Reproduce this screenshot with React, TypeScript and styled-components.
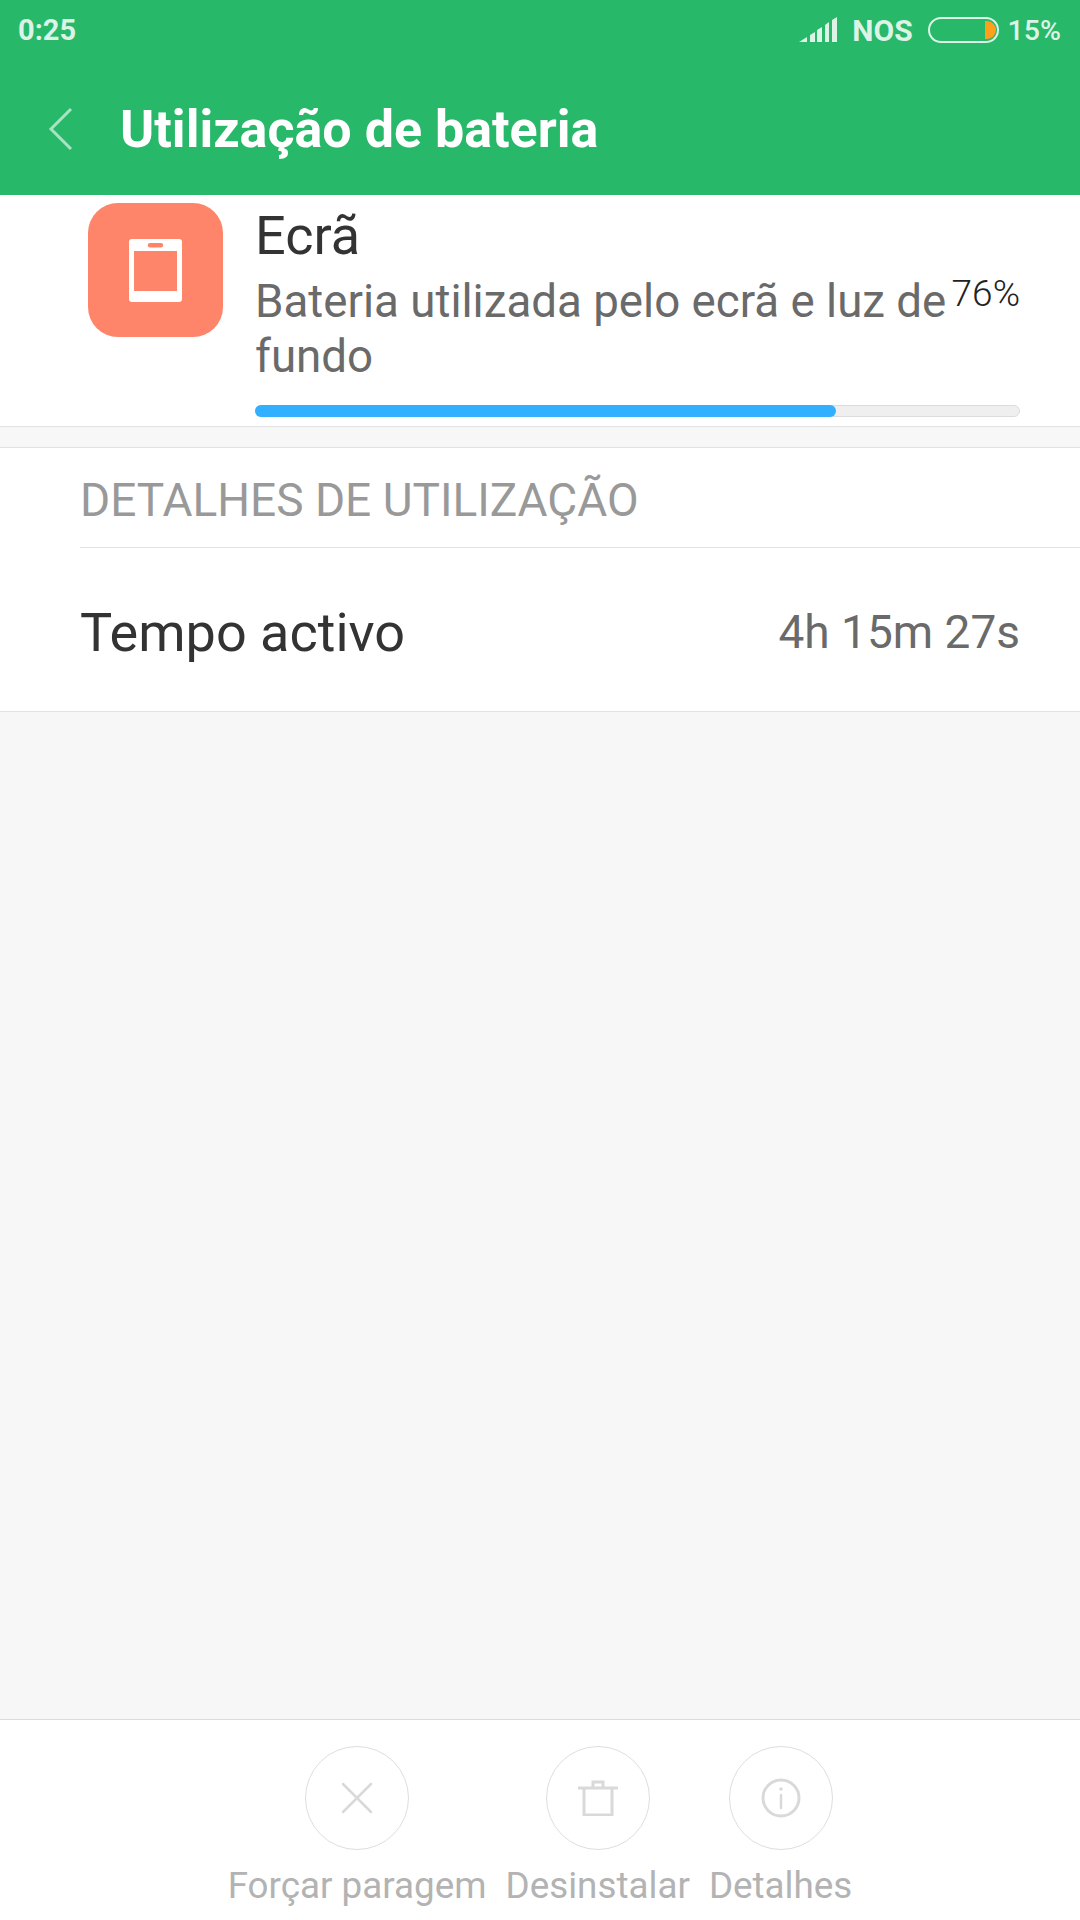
import React from "react";
import styled, { createGlobalStyle } from "styled-components";

const GlobalStyle = createGlobalStyle`
  html, body {
    margin: 0;
    padding: 0;
    background: #f7f7f7;
    font-family: Roboto, "Noto Sans", sans-serif;
  }
  * { box-sizing: border-box; }
`;

const App = () => {
  return (
    <Screen>
      <GlobalStyle />
      <Header>
        <StatusBar>
          <StatusTime>0:25</StatusTime>
          <StatusRight>
            <svg width="38" height="26" viewBox="0 0 38 26">
              <path
                d="M0 25 L8 20 V25 Z M11 18 L16 15 V25 H11 Z M18 13 L23 10 V25 H18 Z M26 8 L30 5 V25 H26 Z M33 3 L38 0 V25 H33 Z"
                fill="#dcf3e6"
              />
            </svg>
            <Carrier>NOS</Carrier>
            <BatteryShell>
              <BatteryFill />
            </BatteryShell>
            <StatusText>15%</StatusText>
          </StatusRight>
        </StatusBar>
        <TitleBar>
          <svg width="26" height="44" viewBox="0 0 26 44">
            <path d="M23 2 L3 22 L23 42" fill="none" stroke="#a9e3c3" strokeWidth="3" />
          </svg>
          <Title>Utilização de bateria</Title>
        </TitleBar>
      </Header>

      <SummaryCard>
        <AppTile>
          <svg width="53" height="63" viewBox="0 0 53 63">
            <path
              fillRule="evenodd"
              fill="#fff"
              d="M3 0 H50 A3 3 0 0 1 53 3 V60 A3 3 0 0 1 50 63 H3 A3 3 0 0 1 0 60 V3 A3 3 0 0 1 3 0 Z M5 12 V52 H48 V12 Z M21 4 A2.200 2.200 0 0 0 21 8.400 H32 A2.200 2.200 0 0 0 32 4 Z"
            />
          </svg>
        </AppTile>
        <SummaryBody>
          <SummaryName>Ecrã</SummaryName>
          <SummaryRow>
            <SummaryText>Bateria utilizada pelo ecrã e luz de fundo</SummaryText>
            <Percent>76%</Percent>
          </SummaryRow>
          <ProgressTrack>
            <ProgressFill style={{ width: `${(583 / 765) * 100}%` }} />
          </ProgressTrack>
        </SummaryBody>
      </SummaryCard>

      <DetailsCard>
        <SectionTitle>DETALHES DE UTILIZAÇÃO</SectionTitle>
        <DetailRow>
          <DetailLabel>Tempo activo</DetailLabel>
          <DetailValue>4h 15m 27s</DetailValue>
        </DetailRow>
      </DetailsCard>

      <Spacer />

      <ActionBar>
        <Action>
          <ActionCircle>
            <svg width="32" height="32" viewBox="0 0 32 32">
              <path d="M2 2 L30 30 M30 2 L2 30" stroke="#d9d9d9" strokeWidth="2.500" strokeLinecap="round" fill="none" />
            </svg>
          </ActionCircle>
          <ActionLabel>Forçar paragem</ActionLabel>
        </Action>
        <Action>
          <ActionCircle>
            <svg width="40" height="36" viewBox="0 0 40 36">
              <path
                d="M1 8 H39 M6 8 V35 H34 V8 M15 8 V2 H25 V8"
                stroke="#d9d9d9"
                strokeWidth="3"
                strokeLinecap="round"
                fill="none"
              />
            </svg>
          </ActionCircle>
          <ActionLabel>Desinstalar</ActionLabel>
        </Action>
        <Action>
          <ActionCircle>
            <svg width="40" height="40" viewBox="0 0 40 40">
              <circle cx="20" cy="20" r="18" stroke="#d9d9d9" strokeWidth="3" fill="none" />
              <path d="M20 17 V30" stroke="#d9d9d9" strokeWidth="2.500" strokeLinecap="round" />
              <circle cx="20" cy="11" r="1.800" fill="#d9d9d9" />
            </svg>
          </ActionCircle>
          <ActionLabel>Detalhes</ActionLabel>
        </Action>
      </ActionBar>
    </Screen>
  );
};

const Screen = styled.div`
  width: 1080px;
  height: 1920px;
  display: flex;
  flex-direction: column;
  background: #f7f7f7;
  overflow: hidden;
`;

const Header = styled.div`
  height: 195px;
  flex-shrink: 0;
  background: #28b86a;
`;

const StatusBar = styled.div`
  height: 60px;
  display: flex;
  align-items: center;
  justify-content: space-between;
  padding: 0 19px 0 18px;
`;

const StatusTime = styled.span`
  font-size: 29px;
  font-weight: 700;
  color: #dcf3e6;
`;

const StatusRight = styled.div`
  display: flex;
  align-items: center;
  gap: 9px;
`;

const StatusText = styled.span`
  font-size: 28.500px;
  font-weight: 500;
  color: #dcf3e6;
`;

const Carrier = styled(StatusText)`
  margin: 0 6px;
  font-size: 30px;
  font-weight: 700;
`;

const BatteryShell = styled.div`
  width: 71px;
  height: 26px;
  border: 2px solid #dcf3e6;
  border-radius: 13px;
  padding: 2px 1px;
  display: flex;
  justify-content: flex-end;
`;

const BatteryFill = styled.div`
  width: 11px;
  height: 18px;
  background: #ff9f1c;
  border-radius: 0 9px 9px 0;
`;

const TitleBar = styled.div`
  height: 135px;
  padding: 3px 0 0 48px;
  display: flex;
  align-items: center;
  gap: 46px;
`;

const Title = styled.h1`
  margin: 0;
  font-size: 52px;
  font-weight: 700;
  color: #fff;
`;

const SummaryCard = styled.div`
  height: 232px;
  flex-shrink: 0;
  display: flex;
  padding: 8px 60px 0 88px;
  gap: 32px;
  background: #fff;
  border-bottom: 1px solid #e2e2e2;
`;

const AppTile = styled.div`
  width: 135px;
  height: 134px;
  flex-shrink: 0;
  border-radius: 30px;
  background: #fe8569;
  display: flex;
  align-items: center;
  justify-content: center;
`;

const SummaryBody = styled.div`
  flex: 1;
  min-width: 0;
  display: flex;
  flex-direction: column;
`;

const SummaryName = styled.div`
  margin-top: 3px;
  font-size: 54px;
  line-height: 60px;
  color: #333;
`;

const SummaryRow = styled.div`
  display: flex;
  justify-content: space-between;
  align-items: flex-start;
`;

const SummaryText = styled.div`
  width: 700px;
  margin-top: 8px;
  font-size: 45.700px;
  line-height: 55px;
  color: #6a6a6a;
`;

const Percent = styled.div`
  margin: 8px 0 0 -10px;
  font-size: 37px;
  font-weight: 300;
  line-height: 40px;
  color: #222;
`;

const ProgressTrack = styled.div`
  height: 12px;
  margin-top: 21px;
  border: 1px solid #dcdcdc;
  border-radius: 6px;
  background: #efefef;
  position: relative;
`;

const ProgressFill = styled.div`
  position: absolute;
  top: -1px;
  left: -1px;
  height: 12px;
  border-radius: 6px;
  background: #30b0ff;
`;

const DetailsCard = styled.div`
  margin-top: 20px;
  flex-shrink: 0;
  background: #fff;
  border-top: 1px solid #e2e2e2;
  border-bottom: 1px solid #e2e2e2;
  padding-left: 80px;
`;

const SectionTitle = styled.div`
  height: 100px;
  padding-top: 4px;
  display: flex;
  align-items: center;
  font-size: 46px;
  color: #999;
  border-bottom: 1px solid #e2e2e2;
`;

const DetailRow = styled.div`
  height: 163px;
  padding: 5px 60px 0 0;
  display: flex;
  align-items: center;
  justify-content: space-between;
`;

const DetailLabel = styled.div`
  font-size: 54px;
  color: #333;
`;

const DetailValue = styled.div`
  font-size: 46px;
  color: #6a6a6a;
`;

const Spacer = styled.div`
  flex: 1;
`;

const ActionBar = styled.div`
  height: 201px;
  flex-shrink: 0;
  background: #fff;
  border-top: 1px solid #dcdcdc;
  display: flex;
  justify-content: center;
  gap: 19px;
  padding-top: 26px;
`;

const Action = styled.div`
  display: flex;
  flex-direction: column;
  align-items: center;
`;

const ActionCircle = styled.div`
  width: 104px;
  height: 104px;
  border-radius: 50%;
  border: 1px solid #dedede;
  display: flex;
  align-items: center;
  justify-content: center;
`;

const ActionLabel = styled.div`
  margin-top: 14px;
  font-size: 36.800px;
  color: #b3b3b3;
  white-space: nowrap;
`;

export default App;
